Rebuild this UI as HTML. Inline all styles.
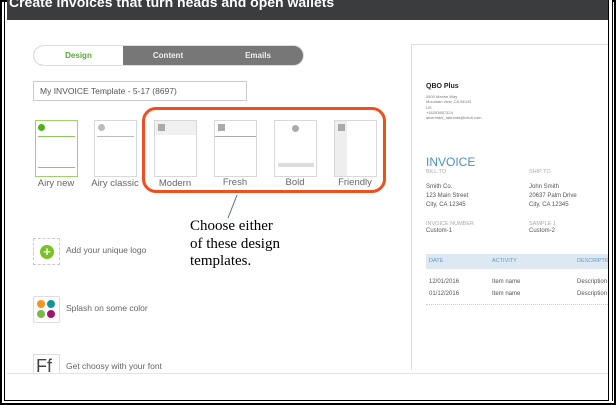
<!DOCTYPE html>
<html><head><style>
*{margin:0;padding:0;box-sizing:border-box}
body{width:616px;height:405px;background:#fff;position:relative;overflow:hidden;font-family:"Liberation Sans",sans-serif}
.a{position:absolute}
.th{position:absolute;top:120px;width:43px;height:57px;border:1px solid #d8d8d8;background:#fff}
.lb{position:absolute;top:178px;font-size:9.5px;color:#666;text-align:center;width:70px}
.sm{font-size:4px;color:#777;line-height:5.3px}
.pv{font-size:6px;color:#555}
.hd{font-size:5.5px;color:#aaa}
</style></head><body>
<div class="a" style="left:0;top:0;width:616px;height:405px;border:2px solid #000"></div>
<div class="a" style="left:4px;top:0;width:608px;height:401px;border:1px solid #000"></div>
<div class="a" style="left:7px;top:0;width:603px;height:20px;background:#3b3c3e;color:#fff;font-weight:bold;font-size:14px;line-height:10px;padding-left:2px;overflow:hidden"><span style="position:relative;top:-3px">Create invoices that turn heads and open wallets</span></div>
<div class="a" style="left:33px;top:45px;width:271px;height:21px;border-radius:11px;background:#777;overflow:hidden;border:1px solid #ddd">
<div class="a" style="left:0;top:0;width:89px;height:21px;background:#fff;color:#5aa83a;font-weight:bold;font-size:8px;text-align:center;line-height:19px">Design</div>
<div class="a" style="left:89px;top:0;width:90px;color:#eee;font-weight:bold;font-size:8px;text-align:center;line-height:19px">Content</div>
<div class="a" style="left:179px;top:0;width:90px;color:#eee;font-weight:bold;font-size:8px;text-align:center;line-height:19px">Emails</div>
</div>
<div class="a" style="left:33px;top:81px;width:214px;height:20px;border:1px solid #ccc;font-size:8.5px;color:#555;line-height:18px;padding-left:6px">My INVOICE Template - 5-17 (8697)</div>
<div class="th" style="left:35px;border-color:#9ed36a;border-width:1.5px"><div class="a" style="left:2px;top:3px;width:7px;height:7px;border-radius:50%;background:#4fb01b"></div><div class="a" style="left:2px;top:15px;width:37px;height:1px;background:#8cc860"></div><div class="a" style="left:2px;top:46px;width:37px;height:1px;background:#8cc860"></div></div>
<div class="th" style="left:94px"><div class="a" style="left:3px;top:3px;width:7px;height:7px;border-radius:50%;background:#bbb"></div><div class="a" style="left:2px;top:15px;width:37px;height:1px;background:#bbb"></div></div>
<div class="th" style="left:154px"><div class="a" style="left:0;top:0;width:41px;height:14px;background:#f0f0f0"></div><div class="a" style="left:3px;top:3px;width:7px;height:7px;background:#aaa"></div></div>
<div class="th" style="left:214px"><div class="a" style="left:3px;top:3px;width:7px;height:7px;background:#aaa"></div><div class="a" style="left:0;top:15px;width:41px;height:1px;background:#aaa"></div></div>
<div class="th" style="left:274px"><div class="a" style="left:17px;top:4px;width:7px;height:7px;border-radius:50%;background:#aaa"></div><div class="a" style="left:3px;top:42px;width:36px;height:4px;background:#ddd"></div></div>
<div class="th" style="left:334px"><div class="a" style="left:0;top:0;width:12px;height:55px;background:#eee"></div><div class="a" style="left:3px;top:3px;width:7px;height:7px;background:#aaa"></div></div>
<div class="lb" style="left:21px">Airy new</div>
<div class="lb" style="left:80px">Airy classic</div>
<div class="lb" style="left:140px">Modern</div>
<div class="lb" style="left:200px;top:177px">Fresh</div>
<div class="lb" style="left:260px;top:177px">Bold</div>
<div class="lb" style="left:320px;top:177px">Friendly</div>
<div class="a" style="left:142px;top:107px;width:244px;height:86px;border:3px solid #f04e1e;border-radius:14px"></div>
<svg class="a" style="left:0;top:0" width="616" height="405"><line x1="237" y1="195" x2="228" y2="218" stroke="#4a6fa0" stroke-width="1"/></svg>
<div class="a" style="left:190px;top:218px;font-family:'Liberation Serif',serif;font-size:15px;line-height:17.5px;color:#000">Choose either<br>of these design<br>templates.</div>
<div class="a" style="left:33px;top:238px;width:27px;height:27px;border:1px dashed #ccc"><div class="a" style="left:6px;top:6px;width:14px;height:14px;border-radius:50%;background:#7ac126;color:#fff;font-size:13px;line-height:13px;text-align:center;font-weight:bold">+</div></div>
<div class="a" style="left:66px;top:245px;font-size:8.5px;color:#666">Add your unique logo</div>
<div class="a" style="left:33px;top:296px;width:27px;height:27px;border:1px solid #ddd;border-radius:2px">
<div class="a" style="left:3px;top:3px;width:8px;height:8px;border-radius:50%;background:#f7941d"></div>
<div class="a" style="left:13px;top:3px;width:8px;height:8px;border-radius:50%;background:#13969b"></div>
<div class="a" style="left:3px;top:13px;width:8px;height:8px;border-radius:50%;background:#7cb94c"></div>
<div class="a" style="left:13px;top:13px;width:8px;height:8px;border-radius:50%;background:#a0166e"></div></div>
<div class="a" style="left:66px;top:303px;font-size:8.5px;color:#666">Splash on some color</div>
<div class="a" style="left:33px;top:354px;width:27px;height:20px;border:1px solid #ddd;border-bottom:none;font-size:18px;color:#444;padding-left:2px;line-height:22px;overflow:hidden">Ff</div>
<div class="a" style="left:66px;top:361px;font-size:8.5px;color:#666">Get choosy with your font</div>
<div class="a" style="left:411px;top:44px;width:200px;height:326px;border-left:1px solid #ddd;border-top:1px solid #ddd"></div>
<div class="a" style="left:7px;top:373px;width:603px;height:1px;background:#e4e4e4"></div>
<div class="a" style="left:426px;top:83px;font-size:7px;font-weight:bold;color:#222">QBO Plus</div>
<div class="a sm" style="left:426px;top:94px">2600 Marine Way<br>Mountain view, CA 94043<br>US<br>+16293657324<br>alvermark_tabunda@intuit.com</div>
<div class="a" style="left:426px;top:155px;font-size:12px;color:#4a90c8">INVOICE</div>
<div class="a hd" style="left:426px;top:169px">BILL TO</div>
<div class="a pv" style="left:426px;top:183px;line-height:9px">Smith Co.<br>123 Main Street<br>City, CA 12345</div>
<div class="a hd" style="left:529px;top:169px">SHIP TO</div>
<div class="a pv" style="left:529px;top:183px;line-height:9px">John Smith<br>20637 Palm Drive<br>City, CA 12345</div>
<div class="a hd" style="left:426px;top:221px">INVOICE NUMBER</div>
<div class="a pv" style="left:426px;top:228px">Custom-1</div>
<div class="a hd" style="left:529px;top:221px">SAMPLE 1</div>
<div class="a pv" style="left:529px;top:228px">Custom-2</div>
<div class="a" style="left:426px;top:254px;width:182px;height:15px;background:#dde8f0"></div>
<div class="a" style="left:429px;top:258px;font-size:5.5px;color:#5a9acb">DATE</div>
<div class="a" style="left:492px;top:258px;font-size:5.5px;color:#5a9acb">ACTIVITY</div>
<div class="a" style="left:577px;top:258px;font-size:5.5px;color:#5a9acb">DESCRIPTIO</div>
<div class="a pv" style="left:429px;top:276px;line-height:12px">12/01/2016<br>01/12/2016</div>
<div class="a pv" style="left:492px;top:276px;line-height:12px">Item name<br>Item name</div>
<div class="a pv" style="left:577px;top:276px;line-height:12px;width:31px;overflow:hidden;white-space:nowrap">Description<br>Description</div>
<div class="a" style="left:426px;top:304px;width:182px;border-top:1px dotted #ccc"></div>
<div class="a" style="left:608px;top:0;width:5px;height:401px;background:#fff;border-left:1px solid #000;border-right:1px solid #000"></div>
</body></html>
